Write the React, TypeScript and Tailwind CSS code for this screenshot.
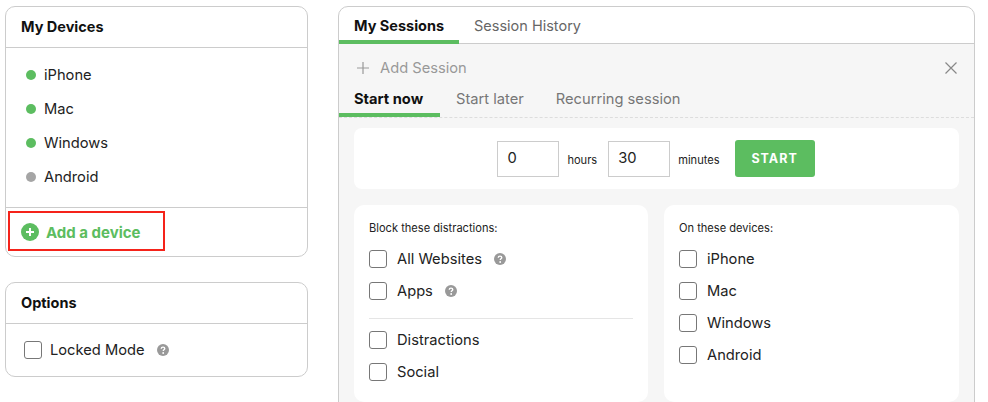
import React from "react";

const Help = ({ className = "" }: { className?: string }) => (
  <svg width="12" height="12" viewBox="0 0 13 13" className={className}>
    <circle cx="6.5" cy="6.5" r="6.5" fill="#999999" />
    <path d="M4.6 5.1c0-1.1.9-1.7 1.9-1.7s1.900.6 1.900 1.600c0 1.300-1.600 1.300-1.600 2.500" fill="none" stroke="#fff" strokeWidth="1.5" />
    <circle cx="6.700" cy="9.800" r="1" fill="#fff" />
  </svg>
);

const Box = () => <span className="block w-[18px] h-[18px] rounded-[3px] border border-[#777777] bg-white shrink-0" />;

const Check = ({ label, help, helpGap }: { label: string; help?: boolean; helpGap?: string }) => (
  <div className="flex items-center h-8">
    <Box />
    <span className="ml-[10px] text-[14.7px] text-[#222222]">{label}</span>
    {help && <Help className={helpGap} />}
  </div>
);

const Dot = ({ label, on = true }: { label: string; on?: boolean }) => (
  <div className="flex items-center h-[34px]">
    <span className={`w-[10px] h-[10px] rounded-full ${on ? "bg-[#5cbd60]" : "bg-[#a5a5a5]"}`} />
    <span className="ml-[8px] text-[14.7px] text-[#222222]">{label}</span>
  </div>
);

export default function App() {
  return (
    <div
      className="w-[988px] h-[402px] overflow-hidden bg-white flex items-start text-[#111111] pt-[6px] pl-[5px]"
      style={{ fontFamily: '"Inter", "Liberation Sans", sans-serif' }}
    >
      <div className="w-[303px] shrink-0 flex flex-col gap-[25px]">
        <section className="relative h-[251px] border border-[#cccccc] rounded-[10px] flex flex-col">
          <div className="h-[41px] shrink-0 border-b border-[#cccccc] pl-[15px] pb-[1px] flex items-center text-[14.5px] font-bold">My Devices</div>
          <div className="flex-1 pl-5 pt-[10px]">
            <Dot label="iPhone" />
            <Dot label="Mac" />
            <Dot label="Windows" />
            <Dot label="Android" on={false} />
          </div>
          <div className="h-[49px] shrink-0 border-t border-[#cccccc] pl-[15px] flex items-center gap-[7px]">
            <svg width="18" height="18" viewBox="0 0 18 18">
              <circle cx="9" cy="9" r="9" fill="#5cbd60" />
              <path d="M9 5v8M5 9h8" stroke="#fff" strokeWidth="2" />
            </svg>
            <span className="mt-[2px] text-[15px] font-bold text-[#5cbd60]">Add a device</span>
          </div>
          <div className="absolute left-[2px] top-[204px] w-[157px] h-[40px] border-2 border-[#f5231a]" />
        </section>
        <section className="h-[95px] border border-[#cccccc] rounded-[10px] flex flex-col">
          <div className="h-[41px] shrink-0 border-b border-[#cccccc] pl-[15px] pb-[1px] flex items-center text-[14.5px] font-bold">Options</div>
          <div className="flex-1 pl-[18px] flex items-center">
            <Box />
            <span className="ml-[8px] text-[14.7px] text-[#222222]">Locked Mode</span>
            <Help className="ml-[12px]" />
          </div>
        </section>
      </div>

      <main className="ml-[30px] w-[637px] h-[420px] shrink-0 border border-[#cccccc] rounded-t-[10px] flex flex-col overflow-hidden">
        <div className="h-[37px] shrink-0 border-b border-[#cccccc] flex text-[14.5px]">
          <div className="w-[120px] h-[37px] border-b-4 border-[#5cbd60] pl-[15px] pt-[8px] font-bold">My Sessions</div>
          <div className="pl-[15px] pt-[8px] text-[#666666]">Session History</div>
        </div>
        <div className="flex-1 bg-[#f6f6f6] flex flex-col">
          <div className="h-[49px] shrink-0 pl-[18px] pr-[17px] pb-[1px] flex items-center justify-between text-[#999999]">
            <div className="flex items-center gap-[11px]">
              <svg width="12" height="12" viewBox="0 0 12 12"><path d="M6 0v12M0 6h12" stroke="#999999" strokeWidth="1.2" /></svg>
              <span className="text-[14.7px]">Add Session</span>
            </div>
            <svg width="12" height="12" viewBox="0 0 12 12"><path d="M.5.5l11 11M11.500.5l-11 11" stroke="#888888" strokeWidth="1.2" /></svg>
          </div>
          <div className="h-[24px] shrink-0 border-b border-dashed border-[#dddddd] flex text-[14.7px] box-content">
            <div className="w-[101px] h-[24px] border-b-4 border-[#5cbd60] pl-[15px] font-bold leading-[12px]">Start now</div>
            <div className="pl-[16px] text-[#777777] leading-[12px]">Start later</div>
            <div className="pl-[32px] text-[#777777] leading-[12px]">Recurring session</div>
          </div>
          <div className="mx-[15px] mt-[10px] h-[61px] shrink-0 bg-white rounded-[8px] flex items-center justify-center">
            <div className="w-[62px] h-[36px] border border-[#cccccc] pl-[9px] flex items-center text-[14.7px] text-[#222222]">0</div>
            <span className="ml-2 mt-[3px] text-[11.1px] text-[#222222]">hours</span>
            <div className="ml-[11px] w-[62px] h-[36px] border border-[#cccccc] pl-[9px] flex items-center text-[14.7px] text-[#222222]">30</div>
            <span className="ml-2 mt-[3px] text-[11.1px] text-[#222222]">minutes</span>
            <div className="ml-[15px] mr-[1px] pt-[1px] w-[80px] h-[37px] rounded-[3px] bg-[#5cbd60] text-white text-[12.5px] font-bold tracking-[1px] flex items-center justify-center">START</div>
          </div>
          <div className="mx-[15px] mt-[16px] flex gap-4">
            <div className="w-[294px] h-[197px] bg-white rounded-[10px] px-[15px] pt-[16px]">
              <div className="text-[11.1px] leading-[14px] text-[#222222] mb-[8px]">Block these distractions:</div>
              <Check label="All Websites" help helpGap="ml-[12px]" />
              <Check label="Apps" help helpGap="ml-[12px]" />
              <div className="border-t border-[#e5e5e5] mt-[11px] mb-[5px]" />
              <Check label="Distractions" />
              <Check label="Social" />
            </div>
            <div className="w-[295px] h-[197px] bg-white rounded-[10px] px-[15px] pt-[16px]">
              <div className="text-[11.1px] leading-[14px] text-[#222222] mb-[8px]">On these devices:</div>
              <Check label="iPhone" />
              <Check label="Mac" />
              <Check label="Windows" />
              <Check label="Android" />
            </div>
          </div>
        </div>
      </main>
    </div>
  );
}
